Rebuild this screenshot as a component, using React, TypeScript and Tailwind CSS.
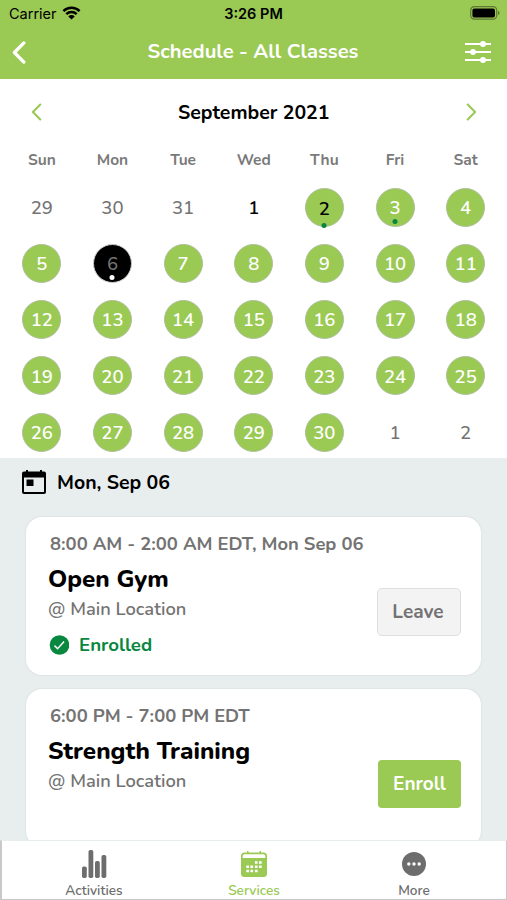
type Day = {
  label: string;
  kind: "muted" | "plain" | "open" | "selected";
  dark?: boolean;
  dot?: string;
};

const weekdays = ["Sun", "Mon", "Tue", "Wed", "Thu", "Fri", "Sat"];

const days: Day[] = [
  { label: "29", kind: "muted" },
  { label: "30", kind: "muted" },
  { label: "31", kind: "muted" },
  { label: "1", kind: "plain" },
  { label: "2", kind: "open", dark: true, dot: "-bottom-[2px] bg-[#08873f]" },
  { label: "3", kind: "open", dot: "bottom-[2px] bg-[#08873f]" },
  { label: "4", kind: "open" },
  { label: "5", kind: "open" },
  { label: "6", kind: "selected", dot: "bottom-[2px] bg-white" },
  ...Array.from({ length: 24 }, (_, i): Day => ({ label: String(i + 7), kind: "open" })),
  { label: "1", kind: "muted" },
  { label: "2", kind: "muted" },
];

const kinds = {
  muted: "text-[#737373] font-medium pt-[2px]",
  plain: "text-black font-semibold pt-[2px]",
  open: "bg-[#9ac954] border border-[#aebf98] font-semibold",
  selected: "bg-black border border-[#ccc] text-[#737373] font-medium pt-[2px]",
};

const DayCell = ({ day }: { day: Day }) => (
  <div className="flex justify-center">
    <div
      className={`relative flex size-[39px] items-center justify-center rounded-full text-[18.5px] leading-none ${kinds[day.kind]} ${
        day.kind === "open" ? (day.dark ? "pt-1 text-black" : "pt-[2px] text-white") : ""
      }`}
    >
      {day.label}
      {day.dot && (
        <span className={`absolute left-1/2 size-[5px] -translate-x-1/2 rounded-full ${day.dot}`} />
      )}
    </div>
  </div>
);

const Chevron = ({ flip, className }: { flip?: boolean; className: string }) => (
  <svg
    viewBox="0 0 10 18"
    fill="none"
    stroke="currentColor"
    strokeLinecap="round"
    strokeLinejoin="round"
    strokeWidth="2.1"
    className={className}
  >
    <path d={flip ? "M1.2 1.5 8.6 9l-7.4 7.5" : "M8.8 1.5 1.4 9l7.4 7.5"} />
  </svg>
);

const StatusBar = () => (
  <div className="flex h-7 items-center px-[9px] text-black">
    <div className="flex flex-1 items-center gap-[5px]">
      <span className="font-[Inter] text-[14.5px]">Carrier</span>
      <svg viewBox="0 0 18 14" className="-mt-[2px] h-[14px] w-[19px]">
        <g fill="none" stroke="black" strokeWidth="2.5">
          <path d="M.9 5.1a11.6 11.6 0 0 1 16.2 0" />
          <path d="M3.8 8.1a7.4 7.4 0 0 1 10.4 0" />
        </g>
        <path d="M9 13.6 5.8 10.4a4.6 4.6 0 0 1 6.4 0z" />
      </svg>
    </div>
    <span className="font-[Inter] text-[14.5px] font-semibold">3:26 PM</span>
    <div className="flex flex-1 justify-end">
      <svg viewBox="0 0 30 14" className="-mt-[2px] -mr-[2px] h-[14px] w-[30px]">
        <rect x=".7" y=".7" width="26" height="12.4" rx="3.6" fill="none" stroke="#5d7933" strokeWidth="1.2" />
        <rect x="2.4" y="2.4" width="22.6" height="9" rx="2" />
        <path d="M28 4.7v4.4q1.6-.8 1.6-2.2T28 4.7" fill="#5d7933" />
      </svg>
    </div>
  </div>
);

const FiltersIcon = () => (
  <svg viewBox="0 0 26 22" className="h-[22px] w-[26px]">
    <g stroke="white" strokeWidth="2">
      <path d="M0 3h26M0 11h26M0 19h26" />
    </g>
    <g fill="white">
      <circle cx="18" cy="3" r="3" />
      <circle cx="8" cy="11" r="3" />
      <circle cx="18" cy="19" r="3" />
    </g>
  </svg>
);

const TodayIcon = () => (
  <svg viewBox="0 0 24 24" className="h-6 w-6">
    <path
      fillRule="evenodd"
      d="M4 0h2v1.5h12V0h2v1.5h2a2 2 0 0 1 2 2v18.5a2 2 0 0 1-2 2H2a2 2 0 0 1-2-2V3.5a2 2 0 0 1 2-2h2zM2 7.6v14.4h20V7.6z"
    />
    <path d="M4.500 9.500h7v6.500h-7z" />
  </svg>
);

const ActivitiesIcon = () => (
  <svg viewBox="0 0 25 28" fill="#6d6d6d" className="h-7 w-[25px]">
    <rect x="0" y="16.5" width="4.8" height="11.5" rx="1.8" />
    <rect x="6.5" y="0" width="4.8" height="28" rx="1.8" />
    <rect x="13" y="11" width="4.8" height="17" rx="1.8" />
    <rect x="19.5" y="5" width="4.8" height="23" rx="1.8" />
  </svg>
);

const ServicesIcon = () => (
  <svg viewBox="0 0 26 26" className="h-[26px] w-[26px]">
    <path
      fill="#9ac954"
      d="M6 0h1.5v1.5h11V0H20v1.5h2.5A3.5 3.5 0 0 1 26 5v17.5a3.5 3.5 0 0 1-3.5 3.5h-19A3.5 3.5 0 0 1 0 22.5V5a3.5 3.5 0 0 1 3.5-3.5H6z"
    />
    <path fill="white" d="M1.7 7V5q0-1.8 2-1.8h18.6q2 0 2 1.8v2z" />
    <path
      fill="white"
      d="M13.9 10.2h2.7v2.6h-2.7zM18 10.2h2.7v2.6H18zM5.3 14.4H8V17H5.3zM9.4 14.4h2.7V17H9.4zM13.9 14.4h2.7V17h-2.7zM18 14.4h2.7V17H18zM5.3 18.7H8v2.6H5.3zM9.4 18.7h2.7v2.6H9.4zM13.9 18.7h2.7v2.6h-2.7z"
    />
  </svg>
);

const MoreIcon = () => (
  <svg viewBox="0 0 24 24" className="h-6 w-6">
    <circle cx="12" cy="12" r="12" fill="#6d6d6d" />
    <g fill="white">
      <circle cx="6.8" cy="12" r="1.7" />
      <circle cx="12" cy="12" r="1.7" />
      <circle cx="17.2" cy="12" r="1.7" />
    </g>
  </svg>
);

const App = () => {
  return (
    <div className="flex h-[900px] w-[507px] flex-col overflow-hidden bg-white font-[Nunito,'Open_Sans',sans-serif]">
      <header className="h-[78.5px] shrink-0 bg-[#9ac954]">
        <StatusBar />
        <div className="flex h-12 items-center justify-between pr-4 pl-3">
          <div className="w-[26px]">
            <Chevron className="h-[23px] w-[14px] stroke-[2.6] text-white" />
          </div>
          <h1 className="ml-[3px] pt-[1px] text-[20.2px] font-bold whitespace-nowrap text-white">
            Schedule - All Classes
          </h1>
          <FiltersIcon />
        </div>
      </header>

      <section className="h-[379.5px] shrink-0 pr-[6px] pl-[6.5px]">
        <div className="flex h-[67.5px] items-center justify-between pr-6 pl-6 text-[#9ac954]">
          <Chevron className="h-[18px] w-[11px]" />
          <h2 className="pt-[1px] text-[19.5px] font-bold text-black">September 2021</h2>
          <Chevron flip className="h-[18px] w-[11px]" />
        </div>
        <div className="grid h-[41.8px] grid-cols-7 pt-[2px] text-center text-[15.5px] font-bold text-[#7a7a7a]">
          {weekdays.map((name) => (
            <span key={name}>{name}</span>
          ))}
        </div>
        <div className="grid grid-cols-7 gap-y-[17.2px]">
          {days.map((day, i) => (
            <DayCell key={i} day={day} />
          ))}
        </div>
      </section>

      <main className="min-h-0 flex-1 overflow-hidden bg-[#e8edee]">
        <div className="flex h-[59px] items-start gap-[11px] pt-3 pl-[22px]">
          <TodayIcon />
          <h2 className="text-[19.5px] leading-[25px] font-bold text-black">Mon, Sep 06</h2>
        </div>
        <div className="flex flex-col gap-[14px] px-[26px]">
          <article className="flex h-[158px] shrink-0 flex-col rounded-2xl bg-white pl-[23px] shadow-[0_0_1px_1px_#dfe4e4]">
            <p className="mt-[15px] ml-[1px] text-[18.4px] leading-6 font-bold text-[#737373]">
              8:00 AM - 2:00 AM EDT, Mon Sep 06
            </p>
            <div className="flex justify-between pr-5">
              <div>
                <h3 className="mt-2 -ml-[1px] text-[24.2px] leading-[31px] font-extrabold text-black">Open Gym</h3>
                <p className="-ml-[1px] text-[18.3px] leading-[28px] font-semibold text-[#737373]">@ Main Location</p>
                <p className="mt-2 flex items-center gap-[10px] text-[18.7px] leading-7 font-bold text-[#08873f]">
                  <svg viewBox="0 0 20 20" className="h-5 w-5">
                    <circle cx="10.5" cy="10" r="9.8" fill="#08873f" />
                    <path d="m5.5 10.6 3.1 3.1 6.5-7.1" fill="none" stroke="white" strokeWidth="1.5" />
                  </svg>
                  <span>Enrolled</span>
                </p>
              </div>
              <button className="mt-8 h-12 w-[84px] rounded-[5px] border border-[#dedede] bg-[#f3f3f3] pr-[2px] text-[19px] font-bold text-[#737373]">
                Leave
              </button>
            </div>
          </article>
          <article className="flex h-[158px] shrink-0 flex-col rounded-2xl bg-white pl-[23px] shadow-[0_0_1px_1px_#dfe4e4]">
            <p className="mt-[15px] ml-[1px] text-[18.4px] leading-6 font-bold text-[#737373]">
              6:00 PM - 7:00 PM EDT
            </p>
            <div className="flex justify-between pr-5">
              <div>
                <h3 className="mt-2 -ml-[1px] text-[24.2px] leading-[31px] font-extrabold text-black">Strength Training</h3>
                <p className="-ml-[1px] text-[18.3px] leading-[28px] font-semibold text-[#737373]">@ Main Location</p>
              </div>
              <button className="mt-8 h-12 w-[83px] rounded-[4px] bg-[#9ac954] text-[19px] font-bold text-white">
                Enroll
              </button>
            </div>
          </article>
        </div>
      </main>

      <nav className="grid h-[60px] shrink-0 grid-cols-3 border-t border-r border-b border-l-2 border-[#c9c9c9] border-t-[#e8edee] bg-white px-[12px] text-[13.6px] leading-4 font-semibold text-[#6d6d6d]">
        <div className="flex flex-col items-center justify-between pt-[9px]">
          <ActivitiesIcon />
          <span>Activities</span>
        </div>
        <div className="flex flex-col items-center justify-between pt-[10px] text-[#9ac954]">
          <ServicesIcon />
          <span>Services</span>
        </div>
        <div className="flex flex-col items-center justify-between pt-[11px]">
          <MoreIcon />
          <span>More</span>
        </div>
      </nav>
    </div>
  );
};

export default App;
